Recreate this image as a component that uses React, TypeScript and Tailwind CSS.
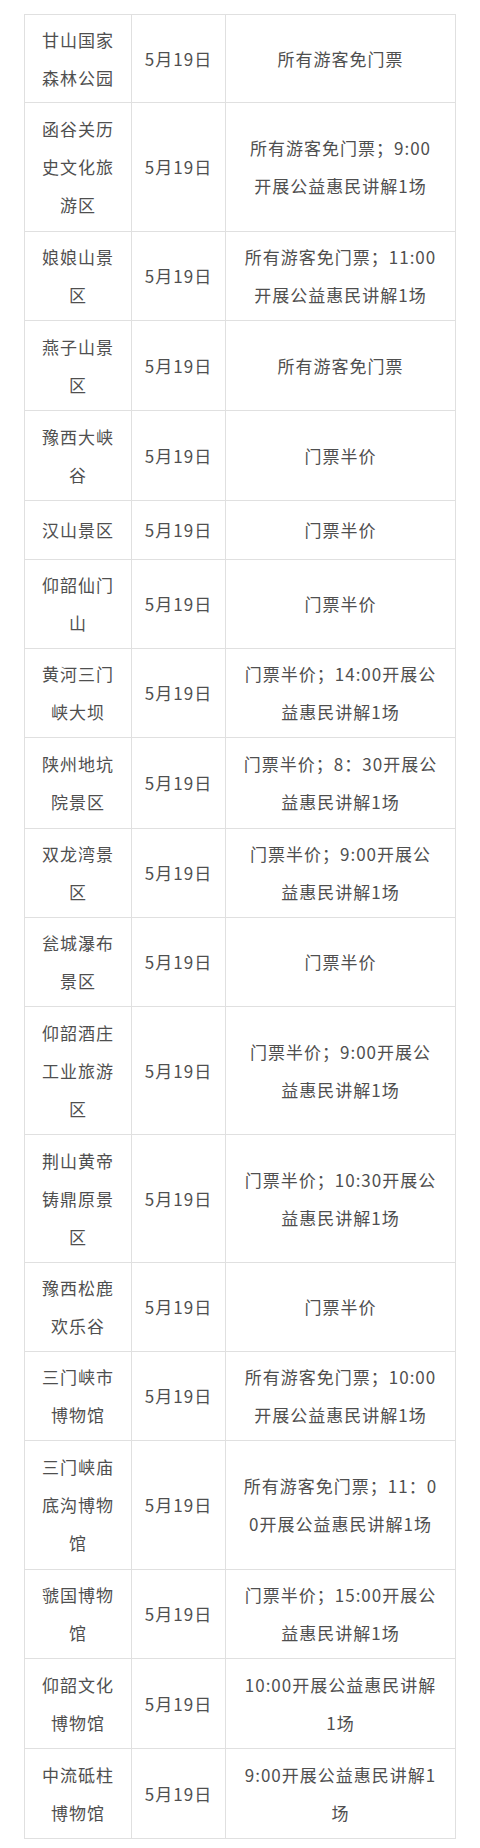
import React from 'react';

interface Row {
  name: string[];
  info: string[];
  h: string;
}

const rows: Row[] = [
  { name: ['甘山国家', '森林公园'], info: ['所有游客免门票'], h: 'h-[88px]' },
  { name: ['函谷关历', '史文化旅', '游区'], info: ['所有游客免门票；9:00', '开展公益惠民讲解1场'], h: 'h-[129px]' },
  { name: ['娘娘山景', '区'], info: ['所有游客免门票；11:00', '开展公益惠民讲解1场'], h: 'h-[89px]' },
  { name: ['燕子山景', '区'], info: ['所有游客免门票'], h: 'h-[90px]' },
  { name: ['豫西大峡', '谷'], info: ['门票半价'], h: 'h-[90px]' },
  { name: ['汉山景区'], info: ['门票半价'], h: 'h-[59px]' },
  { name: ['仰韶仙门', '山'], info: ['门票半价'], h: 'h-[89px]' },
  { name: ['黄河三门', '峡大坝'], info: ['门票半价；14:00开展公', '益惠民讲解1场'], h: 'h-[89px]' },
  { name: ['陕州地坑', '院景区'], info: ['门票半价；8：30开展公', '益惠民讲解1场'], h: 'h-[91px]' },
  { name: ['双龙湾景', '区'], info: ['门票半价；9:00开展公', '益惠民讲解1场'], h: 'h-[89px]' },
  { name: ['瓮城瀑布', '景区'], info: ['门票半价'], h: 'h-[89px]' },
  { name: ['仰韶酒庄', '工业旅游', '区'], info: ['门票半价；9:00开展公', '益惠民讲解1场'], h: 'h-[128px]' },
  { name: ['荆山黄帝', '铸鼎原景', '区'], info: ['门票半价；10:30开展公', '益惠民讲解1场'], h: 'h-[128px]' },
  { name: ['豫西松鹿', '欢乐谷'], info: ['门票半价'], h: 'h-[89px]' },
  { name: ['三门峡市', '博物馆'], info: ['所有游客免门票；10:00', '开展公益惠民讲解1场'], h: 'h-[89px]' },
  { name: ['三门峡庙', '底沟博物', '馆'], info: ['所有游客免门票；11：0', '0开展公益惠民讲解1场'], h: 'h-[129px]' },
  { name: ['虢国博物', '馆'], info: ['门票半价；15:00开展公', '益惠民讲解1场'], h: 'h-[89px]' },
  { name: ['仰韶文化', '博物馆'], info: ['10:00开展公益惠民讲解', '1场'], h: 'h-[90px]' },
  { name: ['中流砥柱', '博物馆'], info: ['9:00开展公益惠民讲解1', '场'], h: 'h-[89px]' },
];

function Lines({ lines }: { lines: string[] }) {
  return (
    <div className="text-center">
      {lines.map((l, i) => (
        <div key={i} className="whitespace-nowrap">{l}</div>
      ))}
    </div>
  );
}

export default function App() {
  return (
    <div
      className="min-h-screen bg-white pt-[14px] pl-[24px] text-[17px] leading-[38px] tracking-[1px] text-[#4f4f4f]"
      style={{ fontFamily: '"Noto Sans CJK SC", "Noto Sans", sans-serif' }}
    >
      <div className="w-[432px] border border-[#e0e0e0]">
        {rows.map((row, i) => (
          <div
            key={i}
            className={`grid grid-cols-[107px_94px_229px] ${row.h} ${i < rows.length - 1 ? 'border-b border-[#e0e0e0]' : ''}`}
          >
            <div className="flex items-center justify-center border-r border-[#e0e0e0]">
              <Lines lines={row.name} />
            </div>
            <div className="flex items-center justify-center border-r border-[#e0e0e0]">
              5月19日
            </div>
            <div className="flex items-center justify-center">
              <Lines lines={row.info} />
            </div>
          </div>
        ))}
      </div>
    </div>
  );
}
